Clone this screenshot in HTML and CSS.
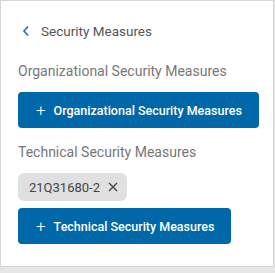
FILE: index.html
```html
<!DOCTYPE html>
<html>
<head>
<meta charset="utf-8">
<link rel="stylesheet" href="styles.css">
</head>
<body>
<div class="card">
  <div class="header">
    <svg class="back" width="8" height="12" viewBox="0 0 8 12"><path d="M6 1.5 L2 6 L6 10.5" fill="none" stroke="#1a73b8" stroke-width="1.6"/></svg>
    <span class="title">Security Measures</span>
  </div>
  <div class="section">
    <div class="label">Organizational Security Measures</div>
    <button class="btn"><span class="plus">+</span>Organizational Security Measures</button>
  </div>
  <div class="section">
    <div class="label">Technical Security Measures</div>
    <div class="chips">
      <span class="chip">21Q31680-2<svg class="x" width="10" height="10" viewBox="0 0 10 10"><path d="M1 1 L9 9 M9 1 L1 9" stroke="#444" stroke-width="1.4"/></svg></span>
    </div>
    <button class="btn"><span class="plus">+</span>Technical Security Measures</button>
  </div>
</div>
</body>
</html>
```
FILE: styles.css
```css
html, body { margin: 0; padding: 0; }
body {
  background: #e6e6e6;
  font-family: Roboto, "Noto Sans", sans-serif;
  width: 275px;
  height: 273px;
}
.card {
  box-sizing: border-box;
  width: 274px;
  height: 267px;
  background: #fff;
  border: 1px solid #d6d6d6;
  padding: 0 17px;
}
.header {
  display: flex;
  align-items: center;
  height: 60px;
  padding-left: 4px;
  gap: 11px;
}
.title {
  font-size: 13.5px;
  color: #555;
}
.label {
  font-size: 14px;
  color: #777;
  line-height: 20px;
  margin-bottom: 11px;
}
.section { margin-bottom: 14px; }
.btn {
  display: flex;
  align-items: center;
  height: 36px;
  border: none;
  border-radius: 4px;
  background: #0068a8;
  color: #fff;
  font-family: inherit;
  font-size: 12.5px;
  font-weight: 500;
  white-space: nowrap;
  padding: 0 17px 0 18px;
}
.plus {
  font-size: 17px;
  font-weight: 300;
  margin-right: 8px;
}
.chips { margin-bottom: 7px; display: flex; }
.chip {
  display: inline-flex;
  align-items: center;
  height: 28px;
  padding: 0 9px 0 11px;
  background: #e0e0e0;
  border-radius: 6px;
  font-size: 13px;
  color: #444;
  gap: 8px;
}
```
